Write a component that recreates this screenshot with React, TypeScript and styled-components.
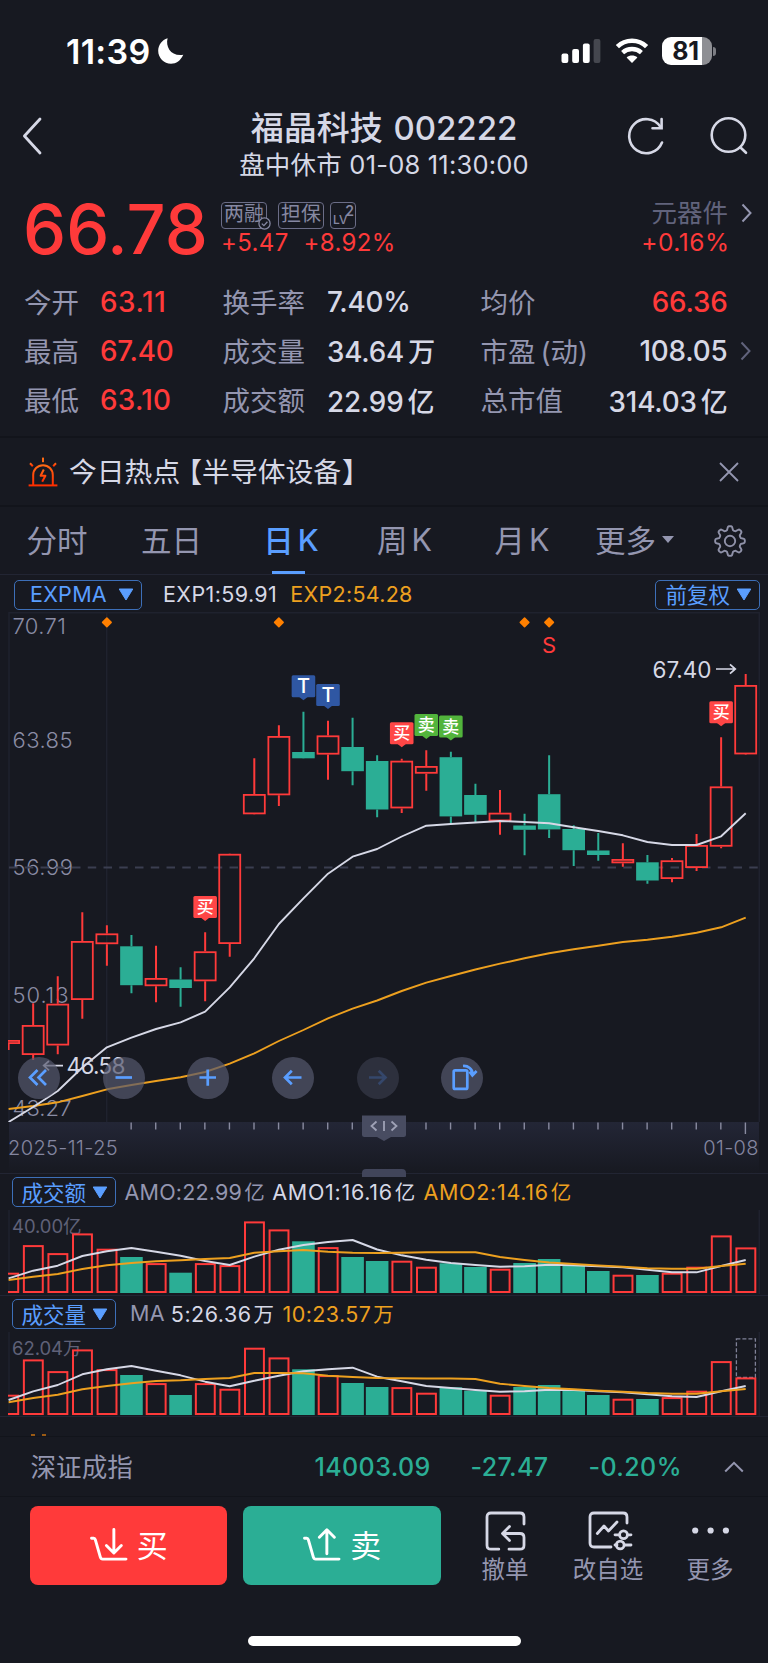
import { Fragment } from 'react';
import styled, { createGlobalStyle } from 'styled-components';

const colors = {
  bg: '#171921',
  line: '#1f222e',
  text: '#d6d8e6',
  muted: '#9496b0',
  dim: '#61637c',
  red: '#ff3a3a',
  green: '#2bae95',
  orange: '#eda01f',
  blue: '#5a9eff',
};

const GlobalStyle = createGlobalStyle`
  * {
    box-sizing: border-box;
  }

  body {
    margin: 0;
    background: ${colors.bg};
    color: ${colors.text};
    font-family: Inter, 'Noto Sans CJK SC', sans-serif;
    -webkit-font-smoothing: antialiased;
  }
`;

// [high, top of body, bottom of body, low, rising]
type Candle = [number, number, number, number, boolean];

const candles: Candle[] = [
  [1040, 1040, 1044, 1050, true],
  [1003.3, 1025, 1055, 1060, true],
  [976.3, 1003.7, 1045.5, 1054.3, true],
  [912.3, 941, 1000, 1018.7, true],
  [925.3, 933.4, 944.2, 965.7, true],
  [935, 946.3, 985.2, 993.3, false],
  [945.7, 978, 986.2, 1002.3, true],
  [967.3, 979.5, 988, 1006.7, false],
  [932.3, 951.3, 981.3, 1001.3, true],
  [854, 853.8, 944, 956.7, true],
  [758.3, 794, 814.3, 814, true],
  [725.3, 736, 795.3, 806, true],
  [711.7, 752, 758.3, 758, false],
  [720.7, 735.4, 754.6, 779.7, true],
  [717.7, 747, 771.2, 785.3, false],
  [755.3, 761, 809.5, 817.3, false],
  [758.7, 760.7, 808.4, 813, true],
  [750.3, 766, 773.7, 790.7, true],
  [751.7, 757.2, 816.4, 823.3, false],
  [783.7, 795, 814.8, 822.3, false],
  [790, 812.7, 821.3, 834.7, true],
  [813.7, 825.5, 829.8, 855.3, false],
  [755.3, 794.2, 829.4, 838, false],
  [825.3, 829, 850.2, 866, false],
  [833, 850.5, 855, 860.7, false],
  [843.3, 859, 863.3, 866.7, true],
  [855, 862.3, 880.5, 883.7, false],
  [858, 860.3, 879, 882.3, true],
  [834, 845, 868, 871, true],
  [737.3, 786.4, 846.7, 848.3, true],
  [674, 685, 754.4, 754, true],
];

const exp1 = [
  1122, 1107, 1091, 1067.5, 1047.3, 1037.7, 1029, 1022.3, 1011.7, 987.3, 958.3,
  924, 898.3, 873.7, 856.7, 849, 836.5, 825.7, 824, 822.5, 821, 822, 823.3,
  827.3, 831, 835.3, 842, 845, 845, 836.3, 813.3,
];

const exp2 = [
  1109, 1106, 1102.3, 1096, 1089.3, 1085, 1081, 1077.3, 1072, 1063.7, 1053.3,
  1041, 1030, 1018.3, 1008.7, 1000.5, 991, 982.7, 976, 969.5, 963.7, 958.3,
  953.3, 949.3, 945.7, 942, 939.7, 936.7, 932.7, 927.3, 917.7,
];

const amount = {
  base: 1293,
  tops: [
    1273.3, 1245.7, 1253.7, 1234, 1249.3, 1257, 1263.7, 1272.7, 1263.7, 1265.7,
    1222, 1230, 1241.3, 1247.7, 1257, 1261, 1261.3, 1267.3, 1263.3, 1267,
    1269.3, 1263, 1259, 1265, 1271, 1275.3, 1275, 1273.3, 1267.3, 1236, 1248,
  ],
  fast: [
    1278.3, 1270.7, 1265.7, 1256, 1251.3, 1248, 1251.7, 1255.7, 1261, 1265,
    1256.7, 1249.7, 1245, 1242, 1240, 1249.5, 1255.3, 1259.7, 1263, 1265,
    1266.7, 1266.3, 1264.7, 1265.3, 1266.3, 1267.3, 1269.7, 1272.3, 1272.3,
    1266, 1260,
  ],
  slow: [
    1280, 1276.7, 1274, 1269, 1265.3, 1263, 1261.3, 1260.3, 1259, 1258, 1252.7,
    1251.3, 1250, 1251.7, 1252.7, 1253, 1252.7, 1252.3, 1252.3, 1252.3, 1257,
    1260, 1262.5, 1264, 1265.5, 1266.7, 1268.3, 1268.7, 1268.7, 1266, 1263.7,
  ],
};

const volume = {
  base: 1415,
  tops: [
    1395.3, 1360, 1371.7, 1350, 1369.7, 1375, 1383.7, 1395, 1383.7, 1389.3,
    1348.3, 1358, 1369.3, 1375.7, 1383, 1387, 1387.7, 1393.3, 1387.3, 1390.7,
    1395.3, 1387, 1385, 1390.3, 1395, 1399.3, 1399, 1397.7, 1391.3, 1361.7,
    1378,
  ],
  fast: [
    1400, 1391.3, 1385, 1374.3, 1369.3, 1366, 1370.7, 1375.3, 1381.7, 1386.3,
    1380.7, 1375.7, 1371.3, 1369.3, 1367.7, 1376.7, 1381.3, 1386, 1388, 1390,
    1391.7, 1391.3, 1389.7, 1390, 1391.3, 1392.3, 1394.3, 1396.3, 1397, 1391.3,
    1386,
  ],
  slow: [
    1402.3, 1398, 1394.7, 1389.3, 1386, 1383.3, 1381, 1380.3, 1379, 1378, 1373,
    1373, 1373.3, 1375.7, 1377, 1378, 1378.3, 1378.5, 1378.5, 1379, 1383.7,
    1386, 1388, 1389.3, 1390.7, 1391.7, 1393, 1393.7, 1393.7, 1391.3, 1389,
  ],
};

const priceLabels = [
  { text: '70.71', y: 634.3, width: 53.5 },
  { text: '63.85', y: 748.2, width: 60 },
  { text: '56.99', y: 875.2, width: 60.5 },
  { text: '50.13', y: 1002.5, width: 56 },
  { text: '43.27', y: 1116, width: 59 },
];

const markers = [
  { index: 12, y: 675.3, text: 'T', fill: '#2f57a3' },
  { index: 13, y: 684, text: 'T', fill: '#2f57a3' },
  { index: 8, y: 896, text: '买', fill: '#ff4646' },
  { index: 16, y: 722.3, text: '买', fill: '#ff4646' },
  { index: 17, y: 714, text: '卖', fill: '#52b43c' },
  { index: 18, y: 715.5, text: '卖', fill: '#52b43c' },
  { index: 29, y: 701.3, text: '买', fill: '#ff4646' },
];

const tabs = [
  { title: '分时' },
  { title: '五日' },
  { title: '日', suffix: 'K', active: true },
  { title: '周', suffix: 'K' },
  { title: '月', suffix: 'K' },
  { title: '更多', hasMenu: true },
];

const xAt = (index: number) => 8.6 + 24.57 * index;

const toPoints = (values: number[]) =>
  values.map((y, i) => `${xAt(i)},${y}`).join(' ');

export default function App() {
  return (
    <Screen>
      <GlobalStyle />
      <StatusBar />
      <Header />
      <Quote />
      <HotTopic />
      <Tabs />
      <PriceChart />
      <DateAxis />
      <AmountChart />
      <VolumeChart />
      <NextPanel>
        <Dash />
        <Dash />
      </NextPanel>
      <IndexBar />
      <Actions />
      <HomeIndicator />
    </Screen>
  );
}

function StatusBar() {
  return (
    <StatusRow>
      <Clock>11:39</Clock>
      <svg width='28' height='28' viewBox='0 0 28 28'>
        <path
          d='M10.6 1.2C8.3 10 14 19.6 26.3 17.8C23.6 23.6 19.3 26.8 14 26.8C7 26.8 1.2 21 1.2 13.8C1.2 8 5 2.8 10.6 1.2Z'
          fill='#fff'
        />
      </svg>
      <Spacer />
      <svg width='40' height='26' viewBox='0 0 40 26'>
        <rect x='0.5' y='15.5' width='6.8' height='9.5' rx='2' fill='#fff' />
        <rect x='11.2' y='11' width='6.8' height='14' rx='2' fill='#fff' />
        <rect x='21.9' y='5.5' width='6.8' height='19.5' rx='2' fill='#fff' />
        <rect x='32.6' y='1' width='6.8' height='24' rx='2' fill='#45474f' />
      </svg>
      <WifiIcon width='34' height='26' viewBox='0 0 34 26'>
        <path
          d='M2.4 8.6C10.4 0.8 23.6 0.8 31.6 8.6'
          strokeWidth='4.6'
          stroke='#fff'
          fill='none'
        />
        <path
          d='M7.6 14.6C12.8 9.8 21.2 9.8 26.4 14.6'
          strokeWidth='4.4'
          stroke='#fff'
          fill='none'
        />
        <path d='M17 25L11.6 19.4C14.6 16.8 19.4 16.8 22.4 19.4Z' fill='#fff' />
      </WifiIcon>
      <Battery>81</Battery>
      <BatteryTip />
    </StatusRow>
  );
}

function Header() {
  return (
    <HeaderRow>
      <svg width='20' height='38' viewBox='0 0 20 38'>
        <path
          d='M18 2L2.4 19L18 36'
          fill='none'
          stroke={colors.text}
          strokeWidth='2.8'
          strokeLinecap='round'
          strokeLinejoin='round'
        />
      </svg>
      <TitleBlock>
        <Title>福晶科技 002222</Title>
        <Subtitle>盘中休市 01-08 11:30:00</Subtitle>
      </TitleBlock>
      <HeaderIcon width='40' height='40' viewBox='0 0 40 40'>
        <path d='M36 26.5A17 17 0 1 1 34.4 10.8' />
        <path d='M35.6 3V12.2H26.5' />
      </HeaderIcon>
      <HeaderIcon width='40' height='40' viewBox='0 0 40 40'>
        <circle cx='19.5' cy='19' r='16.8' />
        <path d='M31.5 31.5L37 36.8' />
      </HeaderIcon>
    </HeaderRow>
  );
}

function Quote() {
  return (
    <QuoteBlock>
      <QuoteTop>
        <Price>66.78</Price>
        <QuoteMid>
          <TagRow>
            <Tag>
              两融
              <TagCheck width='13' height='13' viewBox='0 0 13 13'>
                <circle cx='6.5' cy='6.5' r='5.6' fill={colors.bg} />
                <path d='M3.8 6.6L5.9 8.6L9.4 4.8' fill='none' />
              </TagCheck>
            </Tag>
            <Tag>担保</Tag>
            <LevelTag>
              LV<sup>2</sup>
            </LevelTag>
          </TagRow>
          <Change>
            <span>+5.47</span>
            <span>+8.92%</span>
          </Change>
        </QuoteMid>
        <Sector>
          <SectorName>元器件</SectorName>
          <SectorChange>+0.16%</SectorChange>
        </Sector>
        <Chevron top={11} color={colors.muted} />
      </QuoteTop>
      <Stats>
        <StatLabel>今开</StatLabel>
        <StatValue $up $spacing={0.6}>
          63.11
        </StatValue>
        <StatLabel>换手率</StatLabel>
        <StatValue>7.40%</StatValue>
        <StatLabel>均价</StatLabel>
        <StatValue $up $right>
          66.36
        </StatValue>
        <span />
        <StatLabel>最高</StatLabel>
        <StatValue $up>67.40</StatValue>
        <StatLabel>成交量</StatLabel>
        <StatValue>
          34.64<Unit>万</Unit>
        </StatValue>
        <StatLabel>
          市盈<Paren>(动)</Paren>
        </StatLabel>
        <StatValue $right>108.05</StatValue>
        <Chevron top={0} color={colors.dim} />
        <StatLabel>最低</StatLabel>
        <StatValue $up $spacing={0.3}>
          63.10
        </StatValue>
        <StatLabel>成交额</StatLabel>
        <StatValue>
          22.99<Unit>亿</Unit>
        </StatValue>
        <StatLabel>总市值</StatLabel>
        <StatValue $right>
          314.03<Unit>亿</Unit>
        </StatValue>
        <span />
      </Stats>
    </QuoteBlock>
  );
}

function Chevron({ top, color }: { top: number; color: string }) {
  return (
    <ChevronIcon $top={top} width='11' height='20' viewBox='0 0 11 20'>
      <path
        d='M1.5 1.5L9.5 10L1.5 18.5'
        fill='none'
        stroke={color}
        strokeWidth='2'
      />
    </ChevronIcon>
  );
}

function HotTopic() {
  return (
    <HotRow>
      <svg width='30' height='30' viewBox='0 0 30 30'>
        <defs>
          <linearGradient id='siren' x1='0' y1='0' x2='0' y2='1'>
            <stop offset='0' stopColor='#ff6a14' />
            <stop offset='1' stopColor='#ff2a00' />
          </linearGradient>
        </defs>
        <g
          fill='none'
          stroke='url(#siren)'
          strokeWidth='2'
          strokeLinejoin='round'
        >
          <path d='M5.2 28V18A9.8 9.8 0 0 1 24.8 18V28' />
          <path d='M15.8 12.5L12.6 18.8H17.4L14.2 24.8' />
          <path d='M2 6.2L4.8 9.2M28 6.2L25.2 9.2' />
        </g>
        <rect x='14' y='0.6' width='2' height='4.6' fill='#ff6a14' />
        <rect x='0.6' y='27.4' width='28.8' height='2' fill='#ff3000' />
      </svg>
      <HotText>
        今日热点<Bracket>【</Bracket>半导体设备<Bracket>】</Bracket>
      </HotText>
      <svg width='20' height='20' viewBox='0 0 20 20'>
        <path
          d='M1 1L19 19M19 1L1 19'
          stroke={colors.muted}
          strokeWidth='1.8'
        />
      </svg>
    </HotRow>
  );
}

// eight teeth, rounded off between two radii
const gearPath = (() => {
  const points: string[] = [];
  for (let i = 0; i <= 96; i++) {
    const a = (i / 96) * Math.PI * 2;
    const r = 12.9 + 2 * Math.tanh(2.2 * Math.cos(8 * a));
    const x = 16 + r * Math.sin(a);
    const y = 16 - r * Math.cos(a);
    points.push(`${x.toFixed(2)} ${y.toFixed(2)}`);
  }
  return `M${points.join('L')}Z`;
})();

function Tabs() {
  return (
    <TabRow>
      {tabs.map(({ title, suffix, active, hasMenu }) => (
        <Tab key={title} $active={active}>
          {title}
          {suffix && <TabSuffix>{suffix}</TabSuffix>}
          {hasMenu && <TabArrow />}
        </Tab>
      ))}
      <Settings>
        <svg width='32' height='32' viewBox='0 0 32 32'>
          <g fill='none' stroke='#8f91a8' strokeWidth='1.9'>
            <path d={gearPath} strokeLinejoin='round' />
            <circle cx='16' cy='16' r='5.2' />
          </g>
        </svg>
      </Settings>
    </TabRow>
  );
}

function Triangle() {
  return (
    <svg width='16' height='13' viewBox='0 0 16 13'>
      <path
        d='M1.2 1H14.8L8 12Z'
        fill={colors.blue}
        stroke={colors.blue}
        strokeLinejoin='round'
      />
    </svg>
  );
}

function PriceChart() {
  return (
    <>
      <IndicatorRow>
        <Picker $width={128} $spacing={0.3}>
          <span>EXPMA</span>
          <Triangle />
        </Picker>
        <Reading $left={21} $spacing={0.4}>
          EXP1:59.91
        </Reading>
        <Reading $left={13} $spacing={0.3} $color={colors.orange}>
          EXP2:54.28
        </Reading>
        <Spacer />
        <Picker $width={105}>
          <span>前复权</span>
          <Triangle />
        </Picker>
      </IndicatorRow>
      <PlotArea>
        <Plot height='510' viewBox='0 612 768 510'>
          <path
            d='M9 1122V612.7H759.3V1122M106.7 613V1122'
            fill='none'
            stroke={colors.line}
            strokeWidth='1.5'
          />
          {priceLabels.map(({ text, y, width }) => (
            <text
              key={text}
              x='12.5'
              y={y}
              textLength={width}
              fontSize='22'
              fontWeight='300'
              fill='#8a8ca4'
            >
              {text}
            </text>
          ))}
          <path
            d='M9 867.5H759'
            stroke='#3b3e50'
            strokeWidth='2'
            strokeDasharray='8.5 7.25'
          />
          {[4, 11, 21, 22].map((i) => (
            <rect
              key={i}
              x={xAt(i) - 3.8}
              y='618.6'
              width='7.6'
              height='7.6'
              rx='0.8'
              fill='#ff8000'
              transform={`rotate(45 ${xAt(i)} 622.4)`}
            />
          ))}
          <text
            x={xAt(22)}
            y='653'
            textAnchor='middle'
            fontSize='22'
            fill={colors.red}
          >
            S
          </text>
          <ChartClip id='price-clip' y={612} height={510} />
          <g clipPath='url(#price-clip)'>
            {candles.map((candle, i) => (
              <CandleShape key={i} candle={candle} index={i} />
            ))}
            <Line points={toPoints(exp2)} stroke={colors.orange} />
            <Line points={toPoints(exp1)} stroke={colors.text} />
          </g>
          {markers.map((marker) => (
            <Marker key={marker.index} {...marker} />
          ))}
          <text x='652.5' y='677.6' textLength='59' fontSize='22.5' fill={colors.text}>
            67.40
          </text>
          <text x='66.5' y='1073.8' textLength='59' fontSize='22.5' fill={colors.text}>
            46.58
          </text>
          <path
            d='M716 669H735M730 664.3L735.3 669L730 673.7M63 1065.6H44M49 1061L43.7 1065.6L49 1070.3'
            fill='none'
            stroke={colors.text}
            strokeWidth='1.7'
          />
        </Plot>
        <ChartTools>
          <Tool>
            <path d='M19.5 13L12 20.5L19.5 28M28 13L20.5 20.5L28 28' />
          </Tool>
          <Tool>
            <path d='M12.5 20.5H29' />
          </Tool>
          <Tool>
            <path d='M12.5 20.5H29M20.75 12.5V28.8' />
          </Tool>
          <Tool>
            <path d='M13 20.5H29.5M19.8 13.7L13 20.5L19.8 27.3' />
          </Tool>
          <Tool disabled>
            <path d='M12 20.5H28.5M21.7 13.7L28.5 20.5L21.7 27.3' />
          </Tool>
          <Tool>
            <rect x='12.7' y='13.3' width='13.6' height='18.6' rx='1.5' />
            <path d='M22 9C27 8.6 31.6 12 31.8 17.8M35.6 14L31.4 18.4L28.6 14.6' />
          </Tool>
        </ChartTools>
      </PlotArea>
    </>
  );
}

function Tool({
  children,
  disabled,
}: {
  children: React.ReactNode;
  disabled?: boolean;
}) {
  return (
    <ToolButton $disabled={disabled}>
      <svg width='42' height='42' viewBox='0 0 42 42'>
        {children}
      </svg>
    </ToolButton>
  );
}

function CandleShape({ candle, index }: { candle: Candle; index: number }) {
  const [high, top, bottom, low, rising] = candle;
  const x = xAt(index);
  const color = rising ? colors.red : colors.green;

  return (
    <>
      <path
        d={`M${x} ${high}V${top}M${x} ${bottom}V${low}`}
        stroke={color}
        strokeWidth='2'
      />
      {rising ? (
        <rect
          x={x - 10.5}
          y={top + 0.9}
          width='21'
          height={bottom - top - 1.8}
          fill='none'
          stroke={color}
          strokeWidth='1.8'
        />
      ) : (
        <rect
          x={x - 11.3}
          y={top}
          width='22.6'
          height={bottom - top}
          fill={color}
        />
      )}
    </>
  );
}

function Marker({
  index,
  y,
  text,
  fill,
}: {
  index: number;
  y: number;
  text: string;
  fill: string;
}) {
  const x = xAt(index);

  return (
    <>
      <rect x={x - 11.8} y={y} width='23.6' height='22' rx='1.5' fill={fill} />
      <path d={`M${x - 4.5} ${y + 21.5}h9l-4.5 3.5Z`} fill={fill} />
      <text
        x={x}
        y={text === 'T' ? y + 18 : y + 17}
        textAnchor='middle'
        fontSize={text === 'T' ? 20 : 17}
        fontWeight='500'
        fill='#fff'
      >
        {text}
      </text>
    </>
  );
}

function ChartClip({ id, y, height }: { id: string; y: number; height: number }) {
  return (
    <clipPath id={id}>
      <rect x='8' y={y} width='751' height={height} />
    </clipPath>
  );
}

function DateAxis() {
  return (
    <Axis>
      <Plot height='24' viewBox='0 1122 768 24'>
        {candles.map(
          (_, i) =>
            i > 4 && (
              <path
                key={i}
                d={`M${xAt(i) - 0.3} 1122.5V${i === 30 ? 1134 : 1129.5}`}
                stroke='#898ba0'
                strokeWidth='1.4'
              />
            )
        )}
      </Plot>
      <Dates>
        <span>2025-11-25</span>
        <span>01-08</span>
      </Dates>
      <DragHandle width='46' height='28' viewBox='0 0 46 28'>
        <path
          d='M1 1.5H45V20.5Q45 23 42.5 23H30L23 27L16 23H3.5Q1 23 1 20.5Z'
          fill='#484c61'
        />
        <path
          d='M15.5 7.5L10.5 12L15.5 16.5M30.5 7.5L35.5 12L30.5 16.5M23 7V17'
          fill='none'
          stroke='#9fa2b6'
          strokeWidth='1.8'
        />
      </DragHandle>
      <PanelHandle />
    </Axis>
  );
}

type BarData = typeof amount;

function BarChart({
  id,
  data,
  children,
}: {
  id: string;
  data: BarData;
  children: React.ReactNode;
}) {
  const top = data.base - 83;

  return (
    <Plot height='84' viewBox={`0 ${top} 768 84`}>
      <ChartClip id={id} y={top} height={84} />
      <path
        d={`M9 ${top}v84M759.3 ${top}v84`}
        stroke={colors.line}
        strokeWidth='1.5'
      />
      {children}
      <g clipPath={`url(#${id})`}>
        {data.tops.map((y, i) => (
          <Fragment key={i}>
            {candles[i][4] ? (
              <rect
                x={xAt(i) - 9.3}
                y={y + 0.4}
                width='18.9'
                height={data.base - y - 1.4}
                fill='none'
                stroke={colors.red}
                strokeWidth='2'
              />
            ) : (
              <rect
                x={xAt(i) - 11.3}
                y={y}
                width='22.6'
                height={data.base - y}
                fill={colors.green}
              />
            )}
          </Fragment>
        ))}
        <Line points={toPoints(data.fast)} stroke={colors.text} />
        <Line points={toPoints(data.slow)} stroke={colors.orange} />
      </g>
    </Plot>
  );
}

function AmountChart() {
  return (
    <SubPanel $height={122}>
      <SubHeader>
        <Picker $width={104}>
          <span>成交额</span>
          <Triangle />
        </Picker>
        <Reading $left={8.5} $spacing={0.2} $color={colors.muted}>
          AMO:22.99<Small>亿</Small>
        </Reading>
        <Reading $left={7.5} $spacing={0.7}>
          AMO1:16.16<Small>亿</Small>
        </Reading>
        <Reading $left={7.5} $spacing={0.7} $color={colors.orange}>
          AMO2:14.16<Small>亿</Small>
        </Reading>
      </SubHeader>
      <BarChart id='amount-clip' data={amount}>
        <ScaleText x='12' y='1232.6' textLength='69.5'>
          40.00亿
        </ScaleText>
      </BarChart>
    </SubPanel>
  );
}

function VolumeChart() {
  return (
    <SubPanel $height={121}>
      <SubHeader>
        <Picker $width={104}>
          <span>成交量</span>
          <Triangle />
        </Picker>
        <Reading $left={14} $spacing={0.3} $color={colors.muted}>
          MA
        </Reading>
        <Reading $left={6}>
          5:26.36<Small>万</Small>
        </Reading>
        <Reading $left={8} $spacing={0.4} $color={colors.orange}>
          10:23.57<Small>万</Small>
        </Reading>
      </SubHeader>
      <BarChart id='volume-clip' data={volume}>
        <ScaleText x='12' y='1354.6' textLength='69.5'>
          62.04万
        </ScaleText>
        <rect
          x={xAt(30) - 9.3}
          y='1338.8'
          width='19'
          height='38.7'
          fill='none'
          stroke='#7f8197'
          strokeWidth='1.3'
          strokeDasharray='4 2'
        />
      </BarChart>
    </SubPanel>
  );
}

function IndexBar() {
  return (
    <IndexRow>
      <IndexName>深证成指</IndexName>
      <IndexValue>14003.09</IndexValue>
      <IndexValue>-27.47</IndexValue>
      <IndexValue>-0.20%</IndexValue>
      <svg width='20' height='12' viewBox='0 0 20 12'>
        <path
          d='M1.2 10.5L10 1.8L18.8 10.5'
          fill='none'
          stroke={colors.muted}
          strokeWidth='2'
        />
      </svg>
    </IndexRow>
  );
}

function Actions() {
  return (
    <ActionRow>
      <TradeButton $color={colors.red}>
        <TradeIcon>
          <path d='M1.5 10.5H3.8Q5 10.5 5.4 12L10.6 30Q11.2 32 13 32H37' />
          <path d='M24.5 1.5V25M16.8 18L24.5 25.8L32.2 18' />
        </TradeIcon>
        <TradeLabel>买</TradeLabel>
      </TradeButton>
      <TradeButton $color={colors.green}>
        <TradeIcon>
          <path d='M1.5 10.5H3.8Q5 10.5 5.4 12L10.6 30Q11.2 32 13 32H37' />
          <path d='M24.5 26.5V2M16.8 9.5L24.5 1.8L32.2 9.5' />
        </TradeIcon>
        <TradeLabel>卖</TradeLabel>
      </TradeButton>
      <Action $width={97}>
        <ActionIcon>
          <path d='M13.8 38.2H6Q2 38.2 2 34.2V6Q2 2 6 2H35Q39 2 39 6V13' />
          <path d='M24 38.2H35Q39 38.2 39 34.2V26.5Q39 22.5 35 22.5H18M24.5 15.5L17.5 22.5L24.5 29.5' />
        </ActionIcon>
        撤单
      </Action>
      <Action $width={109}>
        <ActionIcon>
          <path d='M23 36H6Q2 36 2 32V6Q2 2 6 2H35Q39 2 39 6V12' />
          <path d='M9.3 22.5L16 15L20.5 20L29 11M27 23.8H31.5M39.5 23.8H43M27 34H29M36.5 34H43' />
          <circle cx='35.5' cy='23.8' r='3.9' />
          <circle cx='32.2' cy='34' r='3.9' />
        </ActionIcon>
        改自选
      </Action>
      <Action $width={95}>
        <ActionIcon>
          <g fill={colors.text} stroke='none'>
            <circle cx='5.2' cy='19.5' r='3.1' />
            <circle cx='20.6' cy='19.5' r='3.1' />
            <circle cx='35.9' cy='19.5' r='3.1' />
          </g>
        </ActionIcon>
        更多
      </Action>
    </ActionRow>
  );
}

function TradeIcon({ children }: { children: React.ReactNode }) {
  return (
    <svg width='38' height='34' viewBox='0 0 39 35'>
      <g
        fill='none'
        stroke='#fff'
        strokeWidth='3'
        strokeLinecap='round'
        strokeLinejoin='round'
      >
        {children}
      </g>
    </svg>
  );
}

function ActionIcon({ children }: { children: React.ReactNode }) {
  return (
    <ActionSvg width='41' height='41' viewBox='0 0 41 41'>
      <g
        fill='none'
        stroke={colors.text}
        strokeWidth='2.8'
        strokeLinecap='round'
        strokeLinejoin='round'
      >
        {children}
      </g>
    </ActionSvg>
  );
}

const Screen = styled.div`
  display: flex;
  flex-direction: column;
  width: 768px;
  height: 1663px;
  overflow: hidden;
  background: ${colors.bg};
`;

const Spacer = styled.div`
  flex: 1;
`;

const StatusRow = styled.div`
  display: flex;
  align-items: center;
  height: 102px;
  padding: 0 52px 0 66px;
  flex: none;
`;

const Clock = styled.div`
  width: 91px;
  padding-top: 1px;
  font-size: 34px;
  font-weight: 600;
  letter-spacing: 0.3px;
  color: #fff;
`;

const WifiIcon = styled.svg`
  margin: 0 13px 0 14px;
`;

const Battery = styled.div`
  width: 50px;
  height: 28px;
  padding-right: 3px;
  border-radius: 9px;
  background: linear-gradient(to right, #fff 81%, #8e8f94 81%);
  color: ${colors.bg};
  font-size: 25px;
  font-weight: 700;
  line-height: 29px;
  letter-spacing: -0.2px;
  text-align: center;
`;

const BatteryTip = styled.div`
  width: 3px;
  height: 9px;
  margin-left: 1px;
  border-radius: 0 4px 4px 0;
  background: #7c7d83;
`;

const HeaderRow = styled.header`
  display: flex;
  align-items: flex-start;
  height: 90px;
  padding: 14px 18px 0 22px;
  flex: none;

  > :first-child {
    margin-top: 1px;
  }
`;

const TitleBlock = styled.div`
  width: 486px;
  margin: -10px 0 0 97.5px;
  padding-left: 3px;
  text-align: center;
  white-space: nowrap;
`;

const Title = styled.h1`
  margin: 0;
  font-size: 33px;
  font-weight: 500;
  line-height: 45px;
  word-spacing: 2px;
`;

const Subtitle = styled.div`
  font-size: 25.5px;
  line-height: 27px;
  letter-spacing: 0.2px;
`;

const HeaderIcon = styled.svg`
  flex: none;
  margin-right: 43.5px;
  fill: none;
  stroke: ${colors.text};
  stroke-width: 2.6;
  stroke-linecap: round;

  &:last-child {
    margin-right: 0;
  }
`;

const QuoteBlock = styled.section`
  height: 246px;
  flex: none;
  border-bottom: 2px solid #12141b;
`;

const QuoteTop = styled.div`
  display: grid;
  grid-template-columns: 198px 320px 187px 1fr;
  height: 85px;
  padding-left: 23px;
`;

const Price = styled.div`
  font-size: 68.5px;
  font-weight: 500;
  line-height: 75px;
  color: ${colors.red};
`;

const QuoteMid = styled.div`
  padding-top: 10px;
`;

const TagRow = styled.div`
  display: flex;
  gap: 11px;
`;

const Tag = styled.div`
  position: relative;
  width: 46px;
  height: 27px;
  border: 1.5px solid #6b6d87;
  border-radius: 4px;
  color: #8688a2;
  font-size: 20px;
  line-height: 23px;
  text-align: center;
`;

const TagCheck = styled.svg`
  position: absolute;
  right: -5px;
  bottom: -2px;
  stroke: #8688a2;
  stroke-width: 1.3;
`;

const LevelTag = styled(Tag)`
  width: 26px;
  margin-left: -5px;
  padding: 9px 0 0 2px;
  font-size: 12px;
  font-weight: 500;
  line-height: 16px;
  text-align: left;

  sup {
    position: absolute;
    top: 0;
    right: 1px;
    font-size: 14px;
    font-weight: 600;
  }
`;

const Change = styled.div`
  display: flex;
  gap: 15px;
  color: ${colors.red};
  font-size: 24px;
  line-height: 28px;
  letter-spacing: 0.35px;
`;

const Sector = styled.div`
  padding-top: 6px;
  text-align: right;
`;

const SectorName = styled.div`
  color: ${colors.dim};
  font-size: 25.5px;
  line-height: 30px;
`;

const SectorChange = styled.div`
  margin-right: -1.5px;
  color: ${colors.red};
  font-size: 24.5px;
  line-height: 28px;
  letter-spacing: 0.5px;
`;

const ChevronIcon = styled.svg<{ $top: number }>`
  margin: ${({ $top }) => $top}px 0 0 12.5px;
`;

const Stats = styled.div`
  display: grid;
  grid-template-columns: 76px 122.5px 104.5px 153.5px 106px 141px 1fr;
  grid-auto-rows: 49.3px;
  align-items: center;
  padding-left: 24px;
`;

const StatLabel = styled.div`
  padding-bottom: 2px;
  color: ${colors.muted};
  font-size: 27.5px;
  white-space: nowrap;
`;

const StatValue = styled.div<{
  $up?: boolean;
  $right?: boolean;
  $spacing?: number;
}>`
  color: ${({ $up }) => ($up ? colors.red : colors.text)};
  font-size: 27.8px;
  font-weight: 500;
  letter-spacing: ${({ $spacing = -0.2 }) => $spacing}px;
  text-align: ${({ $right }) => ($right ? 'right' : 'left')};
  white-space: nowrap;
`;

const Unit = styled.span`
  margin-left: 4px;
  font-size: 27px;
`;

const Paren = styled.span`
  margin-left: 5px;
`;

const HotRow = styled.section`
  display: flex;
  align-items: center;
  height: 69px;
  padding: 0 29px 0 28px;
  flex: none;
  border-bottom: 2px solid #12141b;
`;

const HotText = styled.div`
  flex: 1;
  padding: 0 0 3px 11px;
  font-size: 27.8px;
`;

const Bracket = styled.span`
  font-feature-settings: 'halt';
  margin-left: 8px;

  & + & {
    margin-left: 1px;
  }
`;

const TabRow = styled.nav`
  display: grid;
  grid-template-columns: 114px 115px 124px 103px 132px 93px 1fr;
  height: 68px;
  flex: none;
  border-bottom: 1.5px solid #222533;
`;

const Tab = styled.div<{ $active?: boolean }>`
  position: relative;
  display: flex;
  align-items: center;
  justify-content: center;
  padding-bottom: 3px;
  color: ${({ $active }) => ($active ? colors.blue : colors.muted)};
  font-size: 30.5px;
  font-weight: ${({ $active }) => ($active ? 500 : 400)};

  &::after {
    content: '';
    display: ${({ $active }) => ($active ? 'block' : 'none')};
    position: absolute;
    left: 43px;
    bottom: 0;
    width: 33px;
    height: 3px;
    background: ${colors.blue};
  }
`;

const TabSuffix = styled.span`
  margin-left: 4px;
`;

const TabArrow = styled.span`
  margin: 0 0 0 6px;
  border: 6px solid transparent;
  border-top: 7px solid ${colors.muted};
  border-bottom: 0;
`;

const Settings = styled.div`
  display: flex;
  align-items: center;
  padding-left: 33px;
`;

const IndicatorRow = styled.div`
  display: flex;
  align-items: center;
  height: 37px;
  padding: 2px 8px 0 14px;
  flex: none;
`;

const Picker = styled.div<{ $width: number; $spacing?: number }>`
  display: flex;
  align-items: center;
  justify-content: flex-end;
  gap: 6px;
  width: ${({ $width }) => $width}px;
  height: 30px;
  padding-right: 7px;
  border: 1.5px solid #3d6fb8;
  border-radius: 5px;
  color: ${colors.blue};
  font-size: 21.5px;
  letter-spacing: ${({ $spacing = 0 }) => $spacing}px;
  flex: none;

  span {
    padding-bottom: 2px;
  }

  svg {
    margin-left: ${({ $spacing }) => ($spacing ? 5 : 0)}px;
  }
`;

const Reading = styled.span<{
  $left: number;
  $color?: string;
  $spacing?: number;
}>`
  margin-left: ${({ $left }) => $left}px;
  padding-bottom: 2px;
  color: ${({ $color = colors.text }) => $color};
  font-size: 21.5px;
  letter-spacing: ${({ $spacing = 0.5 }) => $spacing}px;
  white-space: nowrap;
`;

const Small = styled.span`
  margin-left: 2px;
  font-size: 20.5px;
`;

const PlotArea = styled.div`
  position: relative;
  height: 510px;
  flex: none;
`;

const Plot = styled.svg`
  display: block;
  width: 768px;
`;

const Line = styled.polyline`
  fill: none;
  stroke-width: 1.9;
  stroke-linejoin: round;
`;

const ScaleText = styled.text`
  fill: #5f6178;
  font-size: 18.5px;
`;

const ChartTools = styled.div`
  position: absolute;
  left: 18px;
  bottom: 23px;
  display: flex;
  gap: 42.7px;
`;

const ToolButton = styled.div<{ $disabled?: boolean }>`
  width: 42px;
  height: 42px;
  border-radius: 50%;
  background: ${({ $disabled }) =>
    $disabled ? 'rgba(85, 88, 110, 0.36)' : 'rgba(85, 88, 110, 0.7)'};

  svg {
    display: block;
    fill: none;
    stroke: ${({ $disabled }) => ($disabled ? '#35476b' : colors.blue)};
    stroke-width: 2.7;
  }
`;

const Axis = styled.div`
  position: relative;
  height: 51px;
  flex: none;
  background: linear-gradient(#232636, ${colors.bg}) 9px 0 / 750px 100% no-repeat;
`;

const Dates = styled.div`
  display: flex;
  justify-content: space-between;
  padding: 0 9px 0 8px;
  margin-top: -11px;
  color: #8486a0;
  font-size: 20px;
  font-weight: 300;
  line-height: 26px;
  letter-spacing: 0.4px;
`;

const DragHandle = styled.svg`
  position: absolute;
  left: 361px;
  top: -8px;
`;

const PanelHandle = styled.div`
  position: absolute;
  left: 362px;
  top: 47px;
  width: 44px;
  height: 8px;
  border-radius: 4px 4px 0 0;
  background: #41455a;
`;

const SubPanel = styled.section<{ $height: number }>`
  height: ${({ $height }) => $height}px;
  flex: none;
  border-top: 1px solid #222533;
`;

const SubHeader = styled.div`
  display: flex;
  align-items: center;
  height: 36px;
  padding-left: 12px;
`;

const NextPanel = styled.div`
  display: flex;
  align-items: flex-end;
  gap: 7px;
  height: 21px;
  padding-left: 31px;
  border-top: 1px solid #222533;
  border-bottom: 1px solid #12141b;
  flex: none;
`;

const Dash = styled.span`
  width: 4px;
  height: 2px;
  background: #9a5a14;
`;

const IndexRow = styled.div`
  display: grid;
  grid-template-columns: 284px 156px 118px 135px 1fr;
  align-items: center;
  height: 60px;
  padding-left: 30.5px;
  flex: none;
  border-bottom: 1.5px solid #12141b;
`;

const IndexName = styled.div`
  padding-bottom: 3px;
  color: ${colors.muted};
  font-size: 25.6px;
`;

const IndexValue = styled.div`
  color: ${colors.green};
  font-size: 25px;
  font-weight: 500;
  letter-spacing: 0.4px;
`;

const ActionRow = styled.div`
  display: flex;
  height: 130px;
  padding: 9px 0 0 29.5px;
  flex: none;
`;

const TradeButton = styled.div<{ $color: string }>`
  display: flex;
  align-items: center;
  justify-content: center;
  gap: 9px;
  width: 197.5px;
  height: 79px;
  margin-right: 16px;
  padding: 0 0 2px 1px;
  border-radius: 8px;
  background: ${({ $color }) => $color};
  color: #fff;
  font-size: 31px;
`;

const TradeLabel = styled.span`
  padding-bottom: 3px;
`;

const Action = styled.div<{ $width: number }>`
  display: flex;
  flex-direction: column;
  align-items: center;
  width: ${({ $width }) => $width}px;
  padding-top: 5px;
  color: ${colors.muted};
  font-size: 23.5px;
  line-height: 36px;
`;

const ActionSvg = styled.svg`
  overflow: visible;
  flex: none;
`;

const HomeIndicator = styled.div`
  width: 273px;
  height: 10px;
  margin: 9px 0 0 247.5px;
  border-radius: 5px;
  background: #fff;
  flex: none;
`;
